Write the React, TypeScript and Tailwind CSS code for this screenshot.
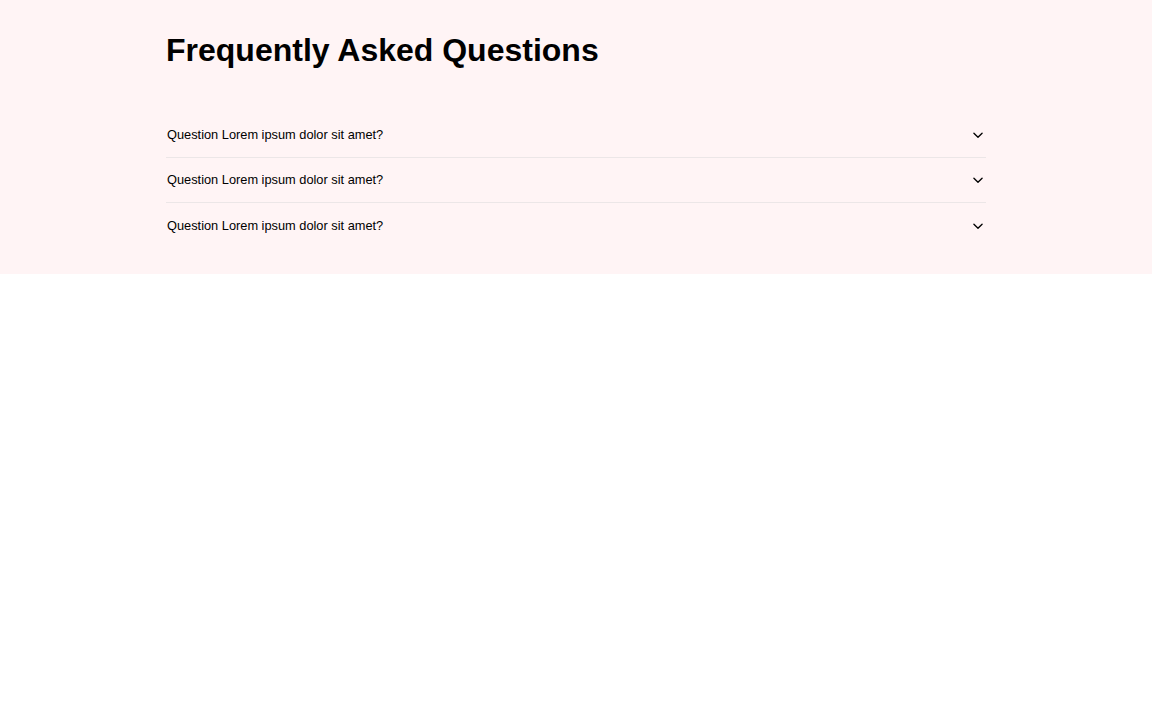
import React from "react";

const Chevron = () => (
  <svg width="14" height="14" viewBox="0 0 24 24" fill="none" stroke="currentColor" strokeWidth="2.3" strokeLinecap="round" strokeLinejoin="round">
    <path d="M5 9l7 7 7-7" />
  </svg>
);

export default function App() {
  const items = [0, 1, 2];
  return (
    <div className="w-full min-h-[720px] bg-white" style={{ fontFamily: '"Liberation Sans", Arial, sans-serif' }}>
      <section className="bg-[#fff4f5] pt-[30px] pb-[26px]">
        <div className="max-w-[820px] mx-auto">
          <h1 className="text-[32px] leading-[40px] font-bold text-black">Frequently Asked Questions</h1>
          <div className="mt-[43px]">
            {items.map((i) => (
              <div
                key={i}
                className={`flex items-center justify-between h-[45px] text-[12.8px] text-black ${i < 2 ? "border-b border-[#ece6e7]" : ""}`}
              >
                <span className="pl-[1px]">Question Lorem ipsum dolor sit amet?</span>
                <span className="mr-[1px]"><Chevron /></span>
              </div>
            ))}
          </div>
        </div>
      </section>
    </div>
  );
}
